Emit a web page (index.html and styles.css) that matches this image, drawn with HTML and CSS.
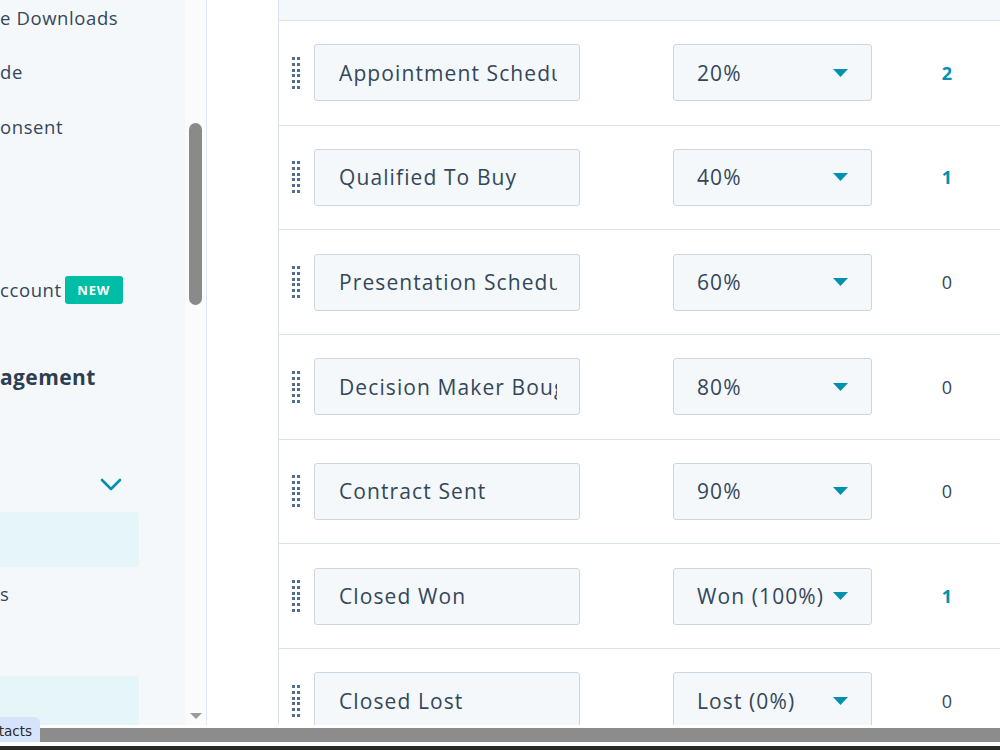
FILE: index.html
```html
<!DOCTYPE HTML>
<html>

<head>
  <meta charset="utf-8">
  <link rel="stylesheet" href="styles.css">
</head>

<body>

  <div class="screen">
    <div class="app">

      <aside class="sidebar">
        <nav class="nav">
          <a class="nav-item">e Downloads</a>
          <a class="nav-item">de</a>
          <a class="nav-item">onsent</a>
          <a class="nav-item"></a>
          <a class="nav-item"></a>
          <a class="nav-item">ccount <span class="badge">NEW</span></a>

          <h3 class="nav-title">agement</h3>

          <a class="nav-item"></a>
          <a class="nav-item nav-toggle">
            <svg class="chevron" width="22" height="14" viewBox="0 0 22 14">
              <path d="M2 2 L11 11 L20 2" fill="none" stroke="#0091ae" stroke-width="2.6" stroke-linecap="round" stroke-linejoin="round"/>
            </svg>
          </a>
          <a class="nav-item is-active"></a>
          <a class="nav-item">s</a>
          <a class="nav-item"></a>
          <a class="nav-item is-active"></a>
        </nav>

        <div class="nav-scroll">
          <div class="nav-thumb"></div>
          <span class="nav-arrow"></span>
        </div>
      </aside>

      <main class="content">
        <div class="stages">
          <div class="stages-head"></div>
        </div>
      </main>

    </div>

    <div class="hscroll"><div class="hscroll-thumb"></div></div>
    <div class="taskbar"></div>

    <div class="tab-tip">tacts</div>
  </div>

  <script>
    const stages = [
      { name: 'Appointment Scheduled', prob: '20%', deals: 2 },
      { name: 'Qualified To Buy', prob: '40%', deals: 1 },
      { name: 'Presentation Scheduled', prob: '60%', deals: 0 },
      { name: 'Decision Maker Bought-In', prob: '80%', deals: 0 },
      { name: 'Contract Sent', prob: '90%', deals: 0 },
      { name: 'Closed Won', prob: 'Won (100%)', deals: 1 },
      { name: 'Closed Lost', prob: 'Lost (0%)', deals: 0 }
    ];

    const handle = `
      <svg class="drag-handle" width="8" height="32" viewBox="0 0 8 32">
        <g fill="#506e91">
          <rect x="0" y="0" width="3" height="3"/><rect x="5" y="0" width="3" height="3"/>
          <rect x="0" y="6" width="3" height="3"/><rect x="5" y="6" width="3" height="3"/>
          <rect x="0" y="12" width="3" height="3"/><rect x="5" y="12" width="3" height="3"/>
          <rect x="0" y="17" width="3" height="3"/><rect x="5" y="17" width="3" height="3"/>
          <rect x="0" y="23" width="3" height="3"/><rect x="5" y="23" width="3" height="3"/>
          <rect x="0" y="29" width="3" height="3"/><rect x="5" y="29" width="3" height="3"/>
        </g>
      </svg>`;

    const caret = `
      <svg class="caret" width="15" height="8" viewBox="0 0 15 8">
        <path d="M0 0 H15 L7.5 8 Z" fill="#0091ae"/>
      </svg>`;

    const list = document.querySelector('.stages');

    stages.forEach(function(stage) {
      const row = document.createElement('div');
      row.classList.add('stage-row');
      row.innerHTML = `
        ${handle}
        <input class="stage-name" type="text" value="${stage.name}">
        <div class="stage-prob"><span>${stage.prob}</span>${caret}</div>
        <div class="stage-count ${stage.deals ? 'has-deals' : ''}">${stage.deals}</div>
      `;
      list.append(row);
    });
  </script>

</body>

</html>
```

FILE: styles.css
```css
* {
  box-sizing: border-box;
}

body {
  margin: 0;
  font-family: "Open Sans", "Noto Sans", sans-serif;
  color: #33475b;
  background: #fff;
}

.screen {
  position: relative;
  width: 1000px;
  height: 750px;
  overflow: hidden;
  display: flex;
  flex-direction: column;
}

.app {
  height: 725px;
  display: flex;
  overflow: hidden;
}

/* left settings menu */

.sidebar {
  display: flex;
  flex: none;
  width: 207px;
  border-right: 1px solid #e1e7ee;
}

.nav {
  width: 185px;
  background: #f5f8fa;
  padding-right: 46px;
  margin-top: -10px;
}

.nav-item {
  display: flex;
  align-items: center;
  height: 54.5px;
  font-size: 18.5px;
  letter-spacing: 0.6px;
  white-space: nowrap;
  border-radius: 0 4px 4px 0;
}

.nav-item.is-active {
  background: #e5f5f8;
}

.nav-toggle {
  justify-content: flex-end;
  padding-right: 17px;
}

.nav-title {
  margin: 0;
  padding-top: 48px;
  height: 86px;
  font-size: 21px;
  line-height: 24px;
  font-weight: 700;
  letter-spacing: 0.4px;
  color: #2d3e50;
}

.badge {
  display: inline-block;
  margin-left: 3px;
  width: 58px;
  height: 28px;
  line-height: 28px;
  text-align: center;
  border-radius: 3px;
  background: #00bda5;
  color: #fff;
  font-size: 13px;
  font-weight: 700;
  letter-spacing: 0.8px;
}

.nav-scroll {
  flex: 1;
  display: flex;
  flex-direction: column;
  align-items: center;
  background: #fbfbfb;
  padding-bottom: 6px;
}

.nav-thumb {
  margin-top: 123px;
  width: 13px;
  height: 182px;
  border-radius: 7px;
  background: #8a8a8a;
}

.nav-arrow {
  margin-top: auto;
  width: 0;
  height: 0;
  border-left: 6px solid transparent;
  border-right: 6px solid transparent;
  border-top: 6px solid #9b9b9b;
}

/* deal stages table */

.content {
  flex: 1;
  padding-left: 71px;
}

.stages {
  border-left: 1px solid #dbe2ea;
  min-width: 740px;
}

.stages-head {
  height: 21px;
  background: #f5f8fa;
  border-bottom: 1px solid #dbe2ea;
}

.stage-row {
  display: flex;
  align-items: center;
  height: 104.67px;
  padding-left: 13px;
  border-bottom: 1px solid #dbe2ea;
}

.drag-handle {
  flex: none;
  margin-right: 14px;
}

.stage-name,
.stage-prob {
  height: 57px;
  background: #f5f8fa;
  border: 1px solid #cbd6e2;
  border-radius: 3px;
  font: inherit;
  font-size: 21px;
  letter-spacing: 1.1px;
  color: #33475b;
}

.stage-name {
  width: 266px;
  padding: 0 22px 0 24px;
  outline: none;
}

.stage-prob {
  display: flex;
  align-items: center;
  justify-content: space-between;
  width: 199px;
  margin-left: 93px;
  padding: 0 23px 0 23px;
}

.caret {
  flex: none;
}

.stage-count {
  width: 150px;
  text-align: center;
  font-size: 18px;
}

.stage-count.has-deals {
  color: #0091ae;
  font-weight: 700;
}

/* bottom bars */

.hscroll {
  height: 21px;
  padding: 3px 0 4px;
  background: #fff;
}

.hscroll-thumb {
  height: 14px;
  background: #8c8c8c;
}

.taskbar {
  height: 4px;
  background: #2b2a24;
}

.tab-tip {
  position: absolute;
  left: 0;
  bottom: 8px;
  width: 40px;
  height: 25px;
  padding: 6px 8px 0 0;
  background: #d6e4fb;
  border-radius: 0 6px 0 0;
  font-family: "DejaVu Sans", sans-serif;
  font-size: 13.5px;
  line-height: 17px;
  color: #2a2a2a;
  overflow: hidden;
  white-space: nowrap;
  direction: rtl;
  text-align: left;
}
```
